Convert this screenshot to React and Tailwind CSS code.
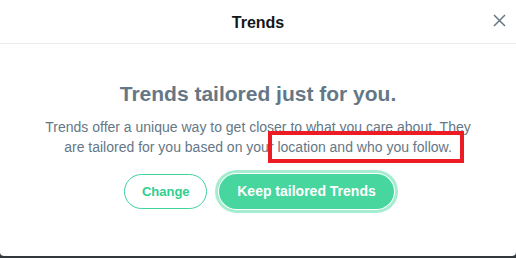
import React from 'react';

const App = () => {
  return (
    <div className="w-[516px] h-[258px] bg-[#33383d] overflow-hidden" style={{ fontFamily: '"Liberation Sans", Arial, sans-serif' }}>
      <div className="h-[256px] bg-white rounded-b-[4px] flex flex-col">
        <div className="relative h-[44px] flex items-center justify-center border-b border-[#e6ecf0]">
          <h1 className="text-[16px] font-bold text-[#14171a] pt-[2px]">Trends</h1>
          <button className="absolute right-[10px] top-[13px] w-[14px] h-[14px] flex items-center justify-center">
            <svg width="13" height="13" viewBox="0 0 13 13" fill="none">
              <path d="M1 1L12 12M12 1L1 12" stroke="#657786" strokeWidth="1.5" />
            </svg>
          </button>
        </div>
        <div className="flex flex-col items-center pt-[37px]">
          <h2 className="text-[21px] leading-[26px] font-bold text-[#657786]">Trends tailored just for you.</h2>
          <div className="relative mt-[10px]">
            <p className="w-[436px] text-center text-[14px] leading-[20px] text-[#657786]">
              Trends offer a unique way to get closer to what you care about. They are tailored for you based on your location and who you follow.
            </p>
            <div className="absolute left-[228px] top-[14px] w-[196px] h-[32px] border-[4px] border-[#ed1c24]" />
          </div>
          <div className="flex items-center gap-[12px] mt-[17px] pl-[2px]">
            <button className="w-[83px] h-[35px] rounded-full border border-[#3fd39a] text-[#2fcf8f] text-[13px] font-bold bg-white">
              Change
            </button>
            <button className="h-[35px] px-[18px] rounded-full bg-[#48d69f] text-white text-[14px] font-bold ring-[3px] ring-[#a6ecd1] ring-offset-[1px] ring-offset-white">
              Keep tailored Trends
            </button>
          </div>
        </div>
      </div>
    </div>
  );
};

export default App;
